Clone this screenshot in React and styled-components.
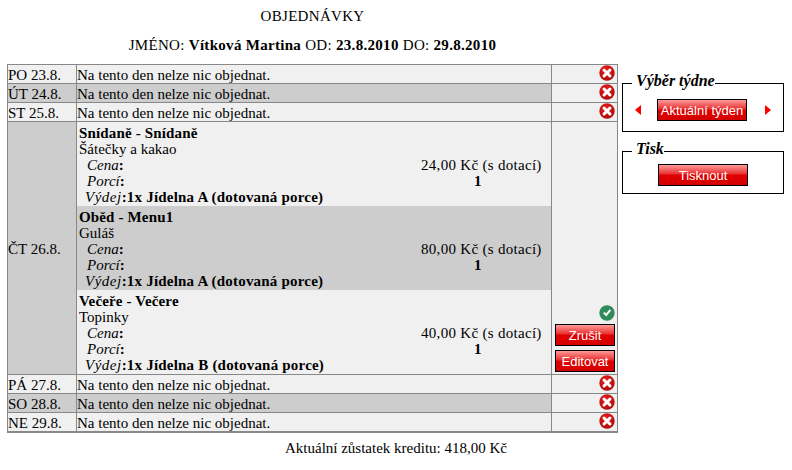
import React from 'react';
import styled, { createGlobalStyle } from 'styled-components';

const GlobalStyle = createGlobalStyle`
  html, body {
    margin: 0;
    padding: 0;
    background: #fff;
    color: #000;
    font-family: "Liberation Serif", "Times New Roman", serif;
    font-size: 15px;
  }
`;

const Page = styled.div`
  width: 792px;
  height: 470px;
  overflow: hidden;
  padding-top: 7px;
  box-sizing: border-box;
`;

const Columns = styled.div`
  display: flex;
  align-items: flex-start;
`;

const Main = styled.div`
  width: 625px;
`;

const Title = styled.div`
  height: 18px;
  line-height: 18px;
  text-align: center;
  letter-spacing: 0.3px;
`;

const Person = styled.div`
  margin-top: 11px;
  height: 18px;
  line-height: 18px;
  text-align: center;
  letter-spacing: 0.3px;
`;

const Table = styled.table`
  margin: 10px 0 0 7px;
  width: 611px;
  border-collapse: collapse;
  table-layout: fixed;
  border-bottom: 2px solid #888;
`;

const Cell = styled.td`
  border: 1px solid #888;
  padding: 2px 0 0;
  height: 16px;
  line-height: 16px;
  background: ${(p) => (p.$dark ? '#cdcdcd' : '#f0f0f0')};
`;

const DayCell = styled(Cell)`
  width: 68px;
`;

const MealsCell = styled(Cell)`
  padding: 0;
`;

const ActionCell = styled(Cell)`
  width: 63px;
  padding: 0 2px 0 0;
  height: 18px;
  text-align: right;
  background: #f0f0f0;
`;

const ActionCellBottom = styled(ActionCell)`
  vertical-align: bottom;
  padding: 0 2px 2px 3px;
`;

const IconLine = styled.span`
  display: flex;
  justify-content: flex-end;
  align-items: flex-start;
  height: 18px;
`;

const CheckLine = styled(IconLine)`
  height: 15px;
`;

const Meal = styled.div`
  height: 84px;
  box-sizing: border-box;
  padding: 3px 10px 0 2px;
  line-height: 16px;
  background: ${(p) => (p.$dark ? '#cdcdcd' : '#f0f0f0')};
`;

const MealName = styled.div`
  font-weight: bold;
  letter-spacing: 0.15px;
`;

const Details = styled.div`
  display: grid;
  grid-template-columns: 1fr 120px;
`;

const Label = styled.span`
  padding-left: 8px;
  font-weight: bold;

  i {
    font-weight: normal;
  }
`;

const Value = styled.div`
  text-align: center;
  white-space: nowrap;
  letter-spacing: 0.3px;
`;

const Portions = styled(Value)`
  font-weight: bold;
  padding-right: 6px;
`;

const Issue = styled.div`
  grid-column: 1 / 3;
  font-weight: bold;
  padding-left: 6px;
  letter-spacing: 0.2px;

  i {
    font-weight: normal;
    letter-spacing: 0.5px;
  }
`;

const Sidebar = styled.div`
  width: 162px;
  margin: 66px 0 0 -3px;
  display: flex;
  flex-direction: column;
  gap: 9px;
`;

const Box = styled.fieldset`
  margin: 0;
  padding: ${(p) => p.$top}px 0 0;
  border: 1px solid #000;
  display: flex;
  justify-content: center;
  align-items: flex-start;
  height: ${(p) => p.$height}px;
  box-sizing: border-box;
`;

const BoxLegend = styled.legend`
  margin-left: 9px;
  padding: 0 0 5px 4px;
  font-size: 16px;
  line-height: 16px;
  font-weight: bold;
  font-style: italic;
`;

const WeekNav = styled.div`
  width: 100%;
  display: flex;
  justify-content: space-between;
  align-items: center;
  padding: 0 12px;
  box-sizing: border-box;

  button {
    margin-right: 2px;
  }
`;

const RedButton = styled.button`
  width: ${(p) => p.$width || 90}px;
  height: 22px;
  margin: 0;
  padding: 0;
  border: 1px solid #000;
  background: linear-gradient(#f99 0, #e83030 45%, #e00000 50%, #d40000 100%);
  color: #fff;
  font-family: "Liberation Sans", Arial, sans-serif;
  font-size: 13px;
  display: block;
`;

const StackButton = styled(RedButton)`
  margin: 4px 0 0 auto;
`;

const Arrow = styled.span`
  width: 0;
  height: 0;
  border-top: 5px solid transparent;
  border-bottom: 5px solid transparent;
  ${(p) => (p.$right ? 'border-left: 6px solid #f00;' : 'border-right: 6px solid #f00;')}
`;

const Balance = styled.div`
  margin-top: 6px;
  text-align: center;
  line-height: 18px;
`;

function CrossIcon() {
  return (
    <svg width="16" height="16" viewBox="0 0 16 16">
      <defs>
        <radialGradient id="crossFill" cx="45%" cy="35%" r="70%">
          <stop offset="0" stopColor="#ee2020" />
          <stop offset="1" stopColor="#a80808" />
        </radialGradient>
      </defs>
      <circle cx="8" cy="8" r="7.7" fill="url(#crossFill)" />
      <path d="M5 5 L11 11 M11 5 L5 11" stroke="#fff" strokeWidth="3" strokeLinecap="round" />
    </svg>
  );
}

function CheckIcon() {
  return (
    <svg width="16" height="16" viewBox="0 0 16 16">
      <circle cx="8" cy="8" r="7.7" fill="#2f8a5c" />
      <path d="M4.8 7.6 L7.2 10 L11.4 4.8" fill="none" stroke="#fff" strokeWidth="2" />
    </svg>
  );
}

const meals = [
  { name: 'Snídaně - Snídaně', food: 'Šátečky a kakao', price: '24,00', issue: '1x Jídelna A (dotovaná porce)' },
  { name: 'Oběd - Menu1', food: 'Guláš', price: '80,00', issue: '1x Jídelna A (dotovaná porce)', dark: true },
  { name: 'Večeře - Večere', food: 'Topinky', price: '40,00', issue: '1x Jídelna B (dotovaná porce)' },
];

function EmptyDay({ day, dark }) {
  return (
    <tr>
      <DayCell $dark={dark}>{day}</DayCell>
      <Cell $dark={dark}>Na tento den nelze nic objednat.</Cell>
      <ActionCell><IconLine><CrossIcon /></IconLine></ActionCell>
    </tr>
  );
}

export default function App() {
  return (
    <Page>
      <GlobalStyle />
      <Columns>
        <Main>
          <Title>OBJEDNÁVKY</Title>
          <Person>
            JMÉNO: <b>Vítková Martina</b> OD: <b>23.8.2010</b> DO: <b>29.8.2010</b>
          </Person>
          <Table>
            <tbody>
              <EmptyDay day="PO 23.8." />
              <EmptyDay day="ÚT 24.8." dark />
              <EmptyDay day="ST 25.8." />
              <tr>
                <DayCell $dark>ČT 26.8.</DayCell>
                <MealsCell>
                  {meals.map((m) => (
                    <Meal key={m.name} $dark={m.dark}>
                      <MealName>{m.name}</MealName>
                      <div>{m.food}</div>
                      <Details>
                        <Label><i>Cena</i>:</Label>
                        <Value>{m.price} Kč (s dotací)</Value>
                        <Label><i>Porcí</i>:</Label>
                        <Portions>1</Portions>
                        <Issue><i>Výdej</i>:{m.issue}</Issue>
                      </Details>
                    </Meal>
                  ))}
                </MealsCell>
                <ActionCellBottom>
                  <CheckLine><CheckIcon /></CheckLine>
                  <StackButton $width={60}>Zrušit</StackButton>
                  <StackButton $width={60}>Editovat</StackButton>
                </ActionCellBottom>
              </tr>
              <EmptyDay day="PÁ 27.8." />
              <EmptyDay day="SO 28.8." dark />
              <EmptyDay day="NE 29.8." />
            </tbody>
          </Table>
        </Main>
        <Sidebar>
          <Box $height={59} $top={5}>
            <BoxLegend>Výběr týdne</BoxLegend>
            <WeekNav>
              <Arrow />
              <RedButton>Aktuální týden</RedButton>
              <Arrow $right />
            </WeekNav>
          </Box>
          <Box $height={53} $top={2}>
            <BoxLegend>Tisk</BoxLegend>
            <RedButton>Tisknout</RedButton>
          </Box>
        </Sidebar>
      </Columns>
      <Balance>Aktuální zůstatek kreditu: 418,00 Kč</Balance>
    </Page>
  );
}
